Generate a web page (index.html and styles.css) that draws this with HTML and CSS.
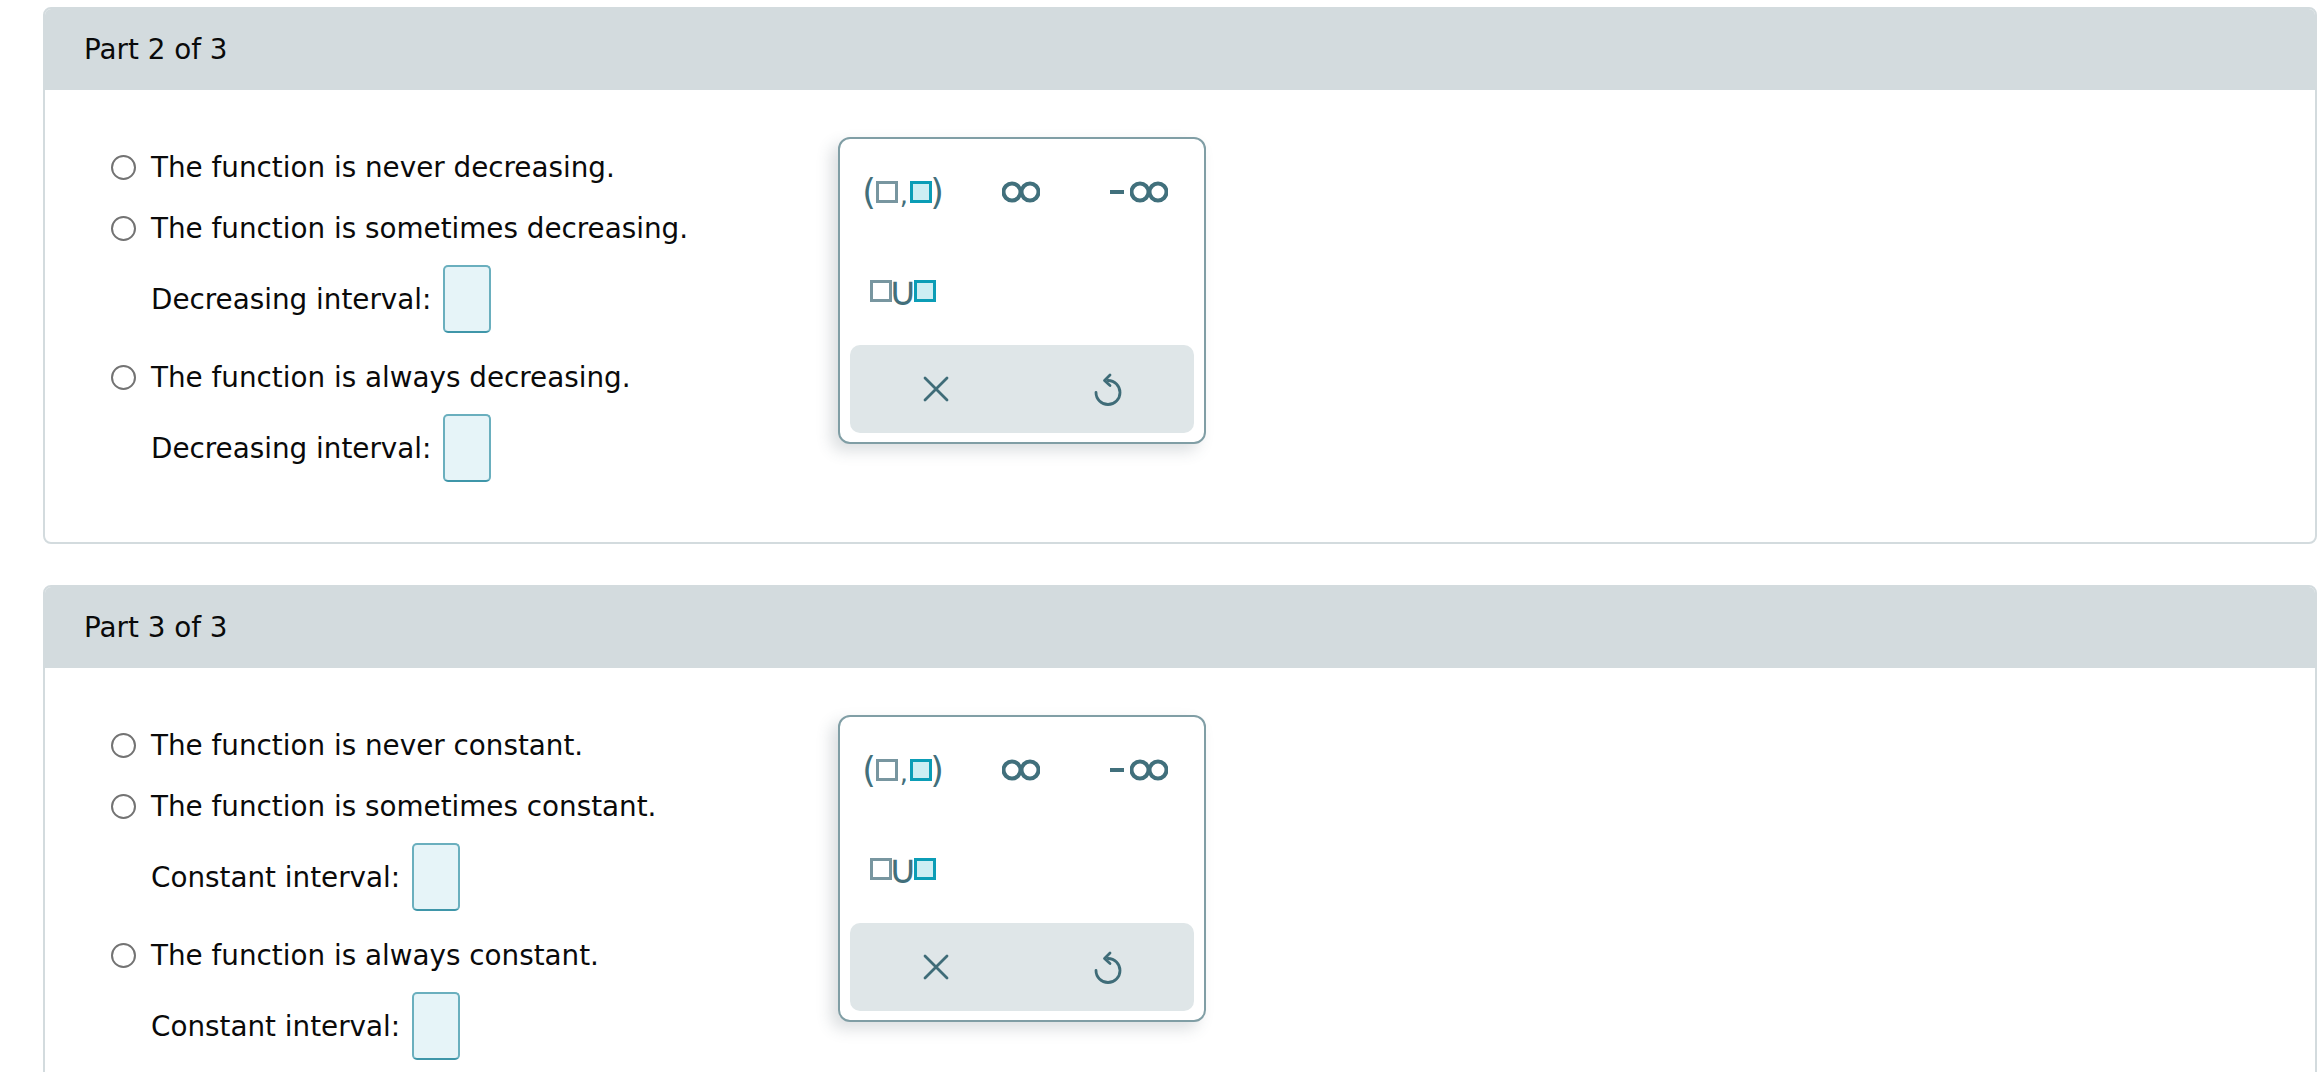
FILE: index.html
```html
<!DOCTYPE html>
<html lang="en">
<head>
<meta charset="utf-8">
<title>Parts</title>
<link rel="stylesheet" href="styles.css">
</head>
<body>
<div class="page">
  <section class="card">
    <div class="card-head">Part 2 of 3</div>
    <div class="card-body">
      <div class="options">
        <div class="opt"><span class="radio"></span><span>The function is never decreasing.</span></div>
        <div class="opt"><span class="radio"></span><span>The function is sometimes decreasing.</span></div>
        <div class="interval"><span>Decreasing interval:</span><span class="ans"></span></div>
        <div class="opt opt-after"><span class="radio"></span><span>The function is always decreasing.</span></div>
        <div class="interval"><span>Decreasing interval:</span><span class="ans"></span></div>
      </div>
      <div class="palette">
        <div class="keys">
          <div class="key">
            <span class="grp">
              <span class="paren">(</span><span class="sq sq-a"></span><span class="comma">,</span><span class="sq sq-b"></span><span class="paren">)</span>
            </span>
          </div>
          <div class="key">
            <svg class="inf" width="38" height="22" viewBox="0 0 38 22" aria-label="infinity"><circle cx="10" cy="11" r="8.5"/><circle cx="28" cy="11" r="8.5"/></svg>
          </div>
          <div class="key">
            <span class="grp"><span class="minus"></span><svg class="inf" width="38" height="22" viewBox="0 0 38 22" aria-label="negative infinity"><circle cx="10" cy="11" r="8.5"/><circle cx="28" cy="11" r="8.5"/></svg></span>
          </div>
          <div class="key">
            <span class="grp"><span class="sq sq-a"></span><span class="cup">∪</span><span class="sq sq-b"></span></span>
          </div>
        </div>
        <div class="actions">
          <div class="act">
            <svg width="26" height="26" viewBox="0 0 26 26" aria-label="clear"><path d="M2 2 L24 24 M24 2 L2 24"/></svg>
          </div>
          <div class="act">
            <svg width="30" height="34" viewBox="0 0 30 34" aria-label="undo"><path d="M15 8.5 A12 12 0 1 1 3 20.5"/><path d="M17 3 L11.5 8.5 L17 13.5"/></svg>
          </div>
        </div>
      </div>
    </div>
  </section>

  <section class="card">
    <div class="card-head">Part 3 of 3</div>
    <div class="card-body">
      <div class="options">
        <div class="opt"><span class="radio"></span><span>The function is never constant.</span></div>
        <div class="opt"><span class="radio"></span><span>The function is sometimes constant.</span></div>
        <div class="interval"><span>Constant interval:</span><span class="ans"></span></div>
        <div class="opt opt-after"><span class="radio"></span><span>The function is always constant.</span></div>
        <div class="interval"><span>Constant interval:</span><span class="ans"></span></div>
      </div>
      <div class="palette">
        <div class="keys">
          <div class="key">
            <span class="grp">
              <span class="paren">(</span><span class="sq sq-a"></span><span class="comma">,</span><span class="sq sq-b"></span><span class="paren">)</span>
            </span>
          </div>
          <div class="key">
            <svg class="inf" width="38" height="22" viewBox="0 0 38 22" aria-label="infinity"><circle cx="10" cy="11" r="8.5"/><circle cx="28" cy="11" r="8.5"/></svg>
          </div>
          <div class="key">
            <span class="grp"><span class="minus"></span><svg class="inf" width="38" height="22" viewBox="0 0 38 22" aria-label="negative infinity"><circle cx="10" cy="11" r="8.5"/><circle cx="28" cy="11" r="8.5"/></svg></span>
          </div>
          <div class="key">
            <span class="grp"><span class="sq sq-a"></span><span class="cup">∪</span><span class="sq sq-b"></span></span>
          </div>
        </div>
        <div class="actions">
          <div class="act">
            <svg width="26" height="26" viewBox="0 0 26 26" aria-label="clear"><path d="M2 2 L24 24 M24 2 L2 24"/></svg>
          </div>
          <div class="act">
            <svg width="30" height="34" viewBox="0 0 30 34" aria-label="undo"><path d="M15 8.5 A12 12 0 1 1 3 20.5"/><path d="M17 3 L11.5 8.5 L17 13.5"/></svg>
          </div>
        </div>
      </div>
    </div>
  </section>
</div>
</body>
</html>
```

FILE: styles.css
```css
html, body {
  margin: 0;
  padding: 0;
  background: #ffffff;
}

body {
  font-family: "DejaVu Sans", Verdana, sans-serif;
  color: #0a0a0a;
  overflow: hidden;
}

.page {
  display: flex;
  flex-direction: column;
  gap: 41px;
  padding: 7px 1px 0 43px;
}

.card {
  border: 2px solid #d3dbde;
  border-radius: 8px;
  background: #fff;
  overflow: hidden;
}

.card-head {
  height: 81px;
  display: flex;
  align-items: center;
  padding-left: 39px;
  background: #d3dbde;
  font-size: 27.8px;
}

.card-body {
  display: flex;
  align-items: flex-start;
  padding: 0 0 60px 66px;
}

.options {
  flex: none;
  width: 727px;
  padding-top: 57px;
  display: flex;
  flex-direction: column;
  font-size: 27.8px;
}

.opt {
  height: 40px;
  display: flex;
  align-items: center;
}

.opt + .opt {
  margin-top: 21px;
}

.opt-after {
  margin-top: 24px;
}

.radio {
  flex: none;
  width: 25px;
  height: 25px;
  box-sizing: border-box;
  border: 2px solid #737373;
  border-radius: 50%;
  margin-right: 15px;
  background: #fff;
}

.interval {
  margin-top: 17px;
  height: 68px;
  display: flex;
  align-items: center;
  gap: 12px;
  padding-left: 40px;
}

.ans {
  width: 48px;
  height: 68px;
  box-sizing: border-box;
  border: 2px solid #6aafbe;
  border-bottom-color: #3f96a9;
  border-radius: 5px;
  background: #e6f4f8;
}

.palette {
  flex: none;
  margin-top: 47px;
  width: 368px;
  height: 307px;
  box-sizing: border-box;
  border: 2px solid #809ea5;
  border-radius: 12px;
  background: #fff;
  box-shadow: -7px 7px 15px rgba(60, 80, 90, 0.18);
  padding: 3px 6px 9px 4px;
}

.keys {
  display: grid;
  grid-template-columns: repeat(3, 118px);
  grid-auto-rows: 99px;
}

.key {
  display: flex;
  align-items: center;
  justify-content: center;
  color: #426f7b;
}

.grp {
  display: flex;
  align-items: center;
}

.paren {
  width: 10px;
  display: flex;
  justify-content: center;
  font-size: 35px;
  line-height: 38px;
  height: 38px;
  color: #426f7b;
}

.paren:first-child {
  margin-right: 2px;
}

.sq {
  width: 22px;
  height: 22px;
  box-sizing: border-box;
  border: 3px solid #7896a0;
}

.sq-b {
  border-color: #0b9db6;
  background: #cdeef3;
}

.comma {
  width: 12px;
  display: flex;
  justify-content: center;
  font-size: 26px;
  line-height: 22px;
  height: 22px;
  position: relative;
  top: 3px;
  color: #426f7b;
}

.cup {
  width: 22px;
  display: flex;
  justify-content: center;
  font-size: 40px;
  line-height: 30px;
  height: 30px;
  color: #426f7b;
}

.inf circle {
  fill: none;
  stroke: #41707c;
  stroke-width: 4;
}

.minus {
  width: 14px;
  height: 4px;
  background: #41707c;
  margin-right: 6px;
}

.actions {
  margin: 5px 4px 0 6px;
  height: 88px;
  border-radius: 10px;
  background: #dfe6e8;
  display: grid;
  grid-template-columns: 1fr 1fr;
}

.act {
  display: flex;
  align-items: center;
  justify-content: center;
}

.act svg path {
  fill: none;
  stroke: #3f6c78;
  stroke-width: 2.8;
  stroke-linecap: round;
  stroke-linejoin: round;
}
```
